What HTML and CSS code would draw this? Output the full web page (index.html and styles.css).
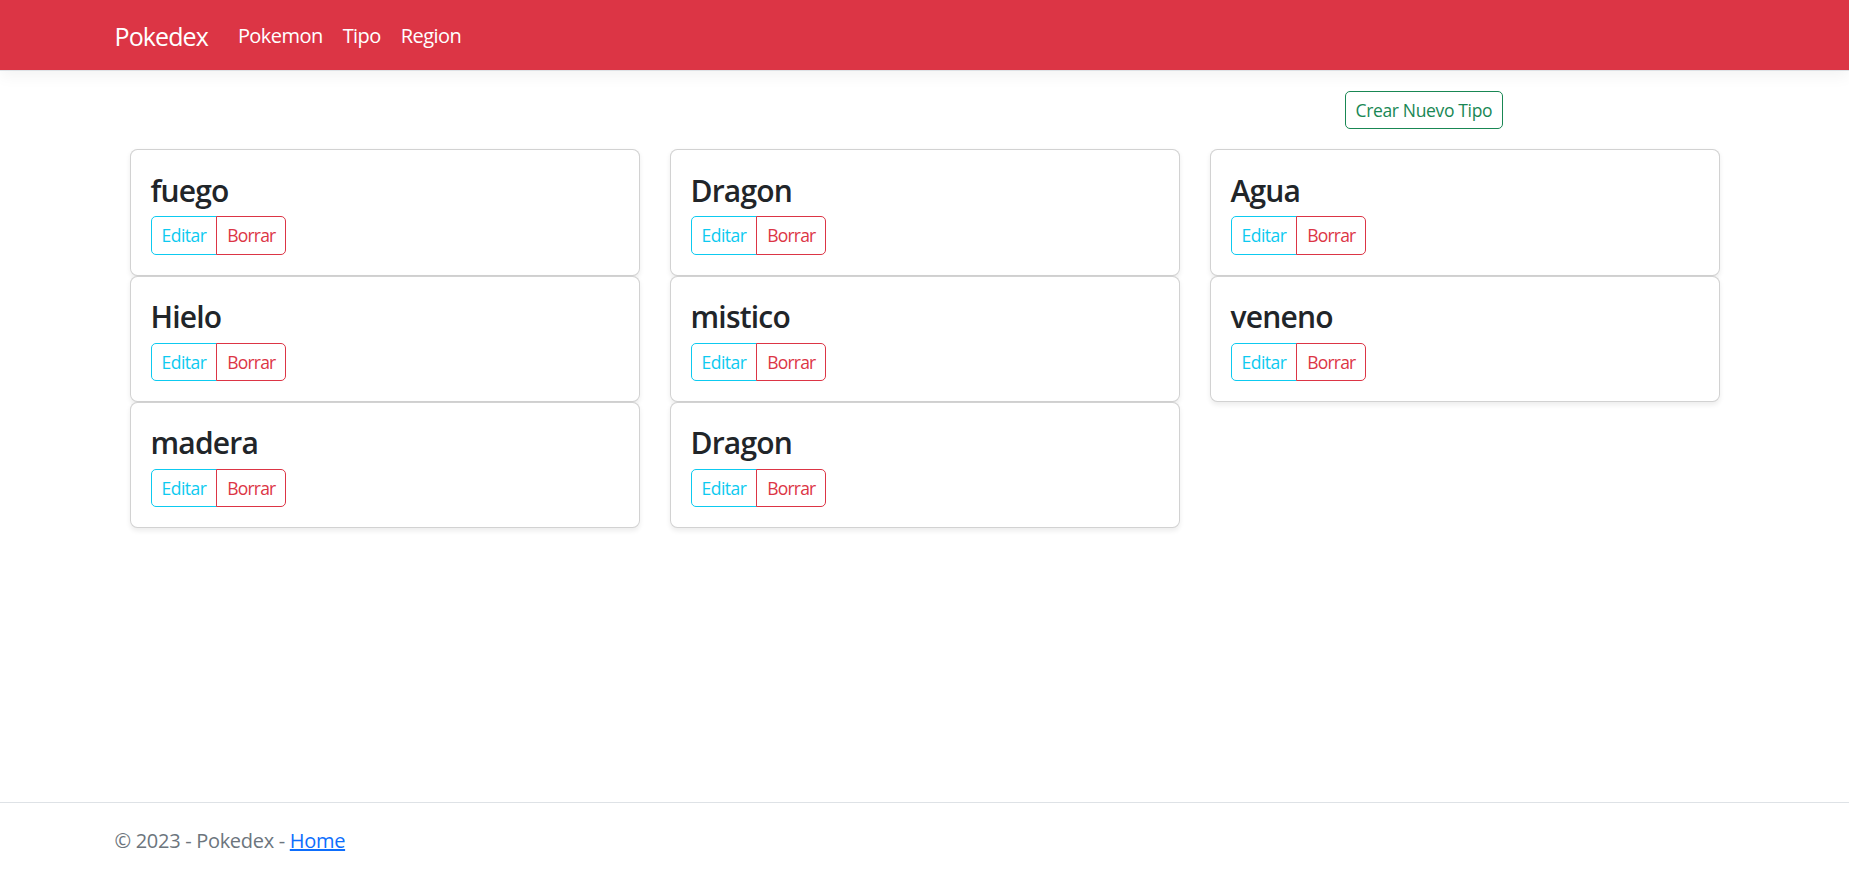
FILE: index.html
```html
<!DOCTYPE html>
<html lang="es">
<head>
<meta charset="utf-8">
<title>Pokedex</title>
<link rel="stylesheet" href="styles.css">
</head>
<body>
<header class="navbar">
  <div class="container nav-inner">
    <a class="brand" href="#">Pokedex</a>
    <ul class="nav-links">
      <li><a class="nav-link" href="#">Pokemon</a></li>
      <li><a class="nav-link" href="#">Tipo</a></li>
      <li><a class="nav-link" href="#">Region</a></li>
    </ul>
  </div>
</header>
<main class="container main">
  <div class="toolbar">
    <div class="toolbar-cell">
      <a class="btn btn-outline-success" href="#">Crear Nuevo Tipo</a>
    </div>
  </div>
  <div class="cards">
    <div class="col"><div class="card"><h4 class="card-title">fuego</h4><div class="btn-group"><a class="btn btn-outline-info" href="#">Editar</a><a class="btn btn-outline-danger" href="#">Borrar</a></div></div></div>
    <div class="col"><div class="card"><h4 class="card-title">Dragon</h4><div class="btn-group"><a class="btn btn-outline-info" href="#">Editar</a><a class="btn btn-outline-danger" href="#">Borrar</a></div></div></div>
    <div class="col"><div class="card"><h4 class="card-title">Agua</h4><div class="btn-group"><a class="btn btn-outline-info" href="#">Editar</a><a class="btn btn-outline-danger" href="#">Borrar</a></div></div></div>
    <div class="col"><div class="card"><h4 class="card-title">Hielo</h4><div class="btn-group"><a class="btn btn-outline-info" href="#">Editar</a><a class="btn btn-outline-danger" href="#">Borrar</a></div></div></div>
    <div class="col"><div class="card"><h4 class="card-title">mistico</h4><div class="btn-group"><a class="btn btn-outline-info" href="#">Editar</a><a class="btn btn-outline-danger" href="#">Borrar</a></div></div></div>
    <div class="col"><div class="card"><h4 class="card-title">veneno</h4><div class="btn-group"><a class="btn btn-outline-info" href="#">Editar</a><a class="btn btn-outline-danger" href="#">Borrar</a></div></div></div>
    <div class="col"><div class="card"><h4 class="card-title">madera</h4><div class="btn-group"><a class="btn btn-outline-info" href="#">Editar</a><a class="btn btn-outline-danger" href="#">Borrar</a></div></div></div>
    <div class="col"><div class="card"><h4 class="card-title">Dragon</h4><div class="btn-group"><a class="btn btn-outline-info" href="#">Editar</a><a class="btn btn-outline-danger" href="#">Borrar</a></div></div></div>
  </div>
</main>
<footer class="footer">
  <div class="container">© 2023 - Pokedex - <a class="footer-link" href="#">Home</a></div>
</footer>
</body>
</html>
```
FILE: styles.css
```css
* { box-sizing: border-box; }

html, body { margin: 0; padding: 0; }

body {
  font-family: "Open Sans", "Noto Sans", "Liberation Sans", sans-serif;
  font-size: 20px;
  line-height: 1.5;
  color: #212529;
  background: #fff;
  min-height: 100vh;
  display: flex;
  flex-direction: column;
}

.container {
  width: 100%;
  max-width: 1650px;
  margin: 0 auto;
  padding: 0 15px;
}

/* Navbar */
.navbar {
  background: #dc3545;
  border-bottom: 1.25px solid #dee2e6;
  box-shadow: 0 5px 15px rgba(0, 0, 0, 0.05);
  padding: 10px 0;
}

.nav-inner {
  display: flex;
  align-items: center;
}

.brand {
  color: #fff;
  text-decoration: none;
  font-size: 25px;
  line-height: 1.5;
  padding: 7.5px 0 5px;
  margin-right: 20px;
  letter-spacing: -0.9px;
}

.nav-links {
  display: flex;
  list-style: none;
  margin: 0;
  padding: 0;
}

.nav-link {
  display: block;
  color: #fff;
  text-decoration: none;
  font-size: 20px;
  padding: 11px 10px 9px;
  line-height: 1.5;
  letter-spacing: -0.55px;
}

/* Main */
.main {
  margin-top: 20px;
  padding-bottom: 20px;
}

.toolbar {
  display: grid;
  grid-template-columns: repeat(12, 1fr);
}

.toolbar-cell {
  grid-column: 10 / span 3;
  padding: 0 15px;
}

.btn {
  display: inline-block;
  font-size: 17.5px;
  line-height: 1.5;
  padding: 5px 10px;
  border: 1.25px solid transparent;
  border-radius: 5px;
  text-decoration: none;
  background: transparent;
  letter-spacing: -0.5px;
}

.btn-outline-success {
  color: #198754;
  border-color: #198754;
  letter-spacing: -0.35px;
}
.btn-outline-info { color: #0dcaf0; border-color: #0dcaf0; }
.btn-outline-danger { color: #dc3545; border-color: #dc3545; letter-spacing: -0.8px; }

.cards {
  margin-top: 20px;
  display: grid;
  grid-template-columns: repeat(3, 1fr);
}

.col {
  padding: 0 15px;
}

.card {
  border: 1.25px solid rgba(0, 0, 0, 0.175);
  border-radius: 7.5px;
  box-shadow: 0 2.5px 5px rgba(0, 0, 0, 0.075);
  padding: 20px;
  background: #fff;
}

.card-title {
  margin: 0 0 7.5px;
  padding-top: 2.5px;
  font-size: 30px;
  font-weight: 600;
  line-height: 1.2;
  color: #212529;
  letter-spacing: -0.8px;
}

.btn-group {
  display: inline-flex;
}

.btn-group .btn:first-child {
  border-top-right-radius: 0;
  border-bottom-right-radius: 0;
}

.btn-group .btn:last-child {
  border-top-left-radius: 0;
  border-bottom-left-radius: 0;
  margin-left: -1.25px;
}

/* Footer */
.footer {
  margin-top: auto;
  border-top: 1.25px solid #dee2e6;
  color: #6c757d;
  line-height: 75px;
  white-space: nowrap;
  font-size: 20px;
  letter-spacing: -0.3px;
}

.footer-link {
  color: #0d6efd;
  text-decoration: underline;
}
```
